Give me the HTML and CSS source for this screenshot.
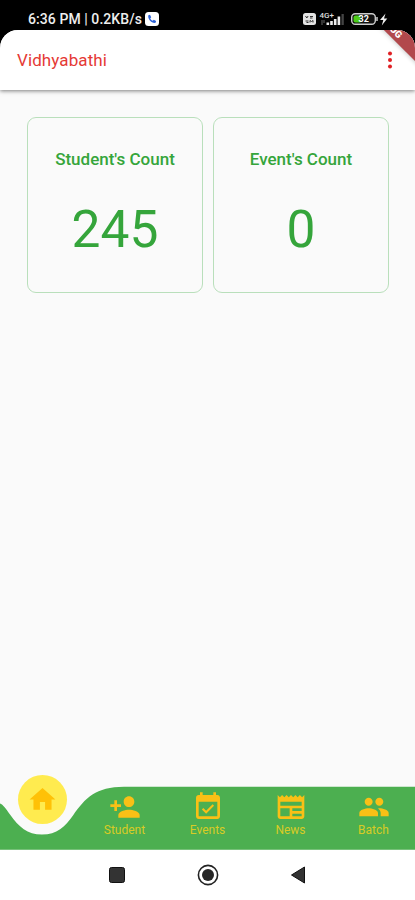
FILE: index.html
```html
<!DOCTYPE html>
<html lang="en">
<head>
<meta charset="utf-8">
<title>Vidhyabathi</title>
<link rel="stylesheet" href="styles.css">
</head>
<body>
<div class="phone">
  <div class="status">
    <span class="status-text">6:36 PM | 0.2KB/s</span>
    <svg class="call" width="14" height="14" viewBox="0 0 14 14"><rect width="14" height="14" rx="3.5" fill="#fff"/><path d="M3.3 3.2 5 2.7l1.2 2.5-1 1.2c.6 1.1 1.4 1.9 2.5 2.4l1.1-1 2.3 1.2-.5 1.8c-3.800.8-8.100-3.500-7.300-7.600z" fill="#2c62d8"/></svg>
    <svg class="signals" width="90" height="18" viewBox="0 0 90 18">
      <rect x="1" y="3" width="13" height="12" rx="2.5" fill="#e4e4e4"/>
      <path d="M3.500 6l1.300 2 1.300-2M8 6.500h3M8 8h2.500M3.500 11h3M4.500 12.500h2M8 12.500v-2l1.500 1 1.500-1v2" stroke="#333" fill="none"/>
      <text x="17.500" y="8" class="net">4G+</text>
      <path d="M20 10v5M22 10v3" stroke="#666" fill="none"/>
      <path d="M24.500 15v-2.500h2.600V15zM28.200 15v-4h2.600v4zM31.900 15V9h2.600v6zM35.600 15V6.500h2.600V15z" fill="#eee"/>
      <path d="M39.500 4h2.300v11h-2.300z" fill="#444"/>
      <rect x="49.700" y="3.700" width="23.600" height="10.600" rx="3.500" fill="#111" stroke="#ccc" stroke-width="1.400"/>
      <path d="M53.500 5.500h5v7h-5q-2 0-2-2v-3q0-2 2-2z" fill="#4bcb16"/>
      <text x="56.500" y="12.300" class="charge">32</text>
      <path d="M75 7v4" stroke="#ccc" stroke-width="1.500"/>
      <path d="M83.500 3.500 78 10h3.300l-1.500 5.500 5.500-7H82z" fill="#eee"/>
    </svg>
  </div>
  <div class="app">
    <header class="bar">
      <h1>Vidhyabathi</h1>
      <svg class="more" width="6" height="20" viewBox="0 0 6 20"><g fill="#e02024"><circle cx="3" cy="3.600" r="2"/><circle cx="3" cy="10" r="2"/><circle cx="3" cy="16.400" r="2"/></g></svg>
      <span class="banner">DEBUG</span>
    </header>
    <main class="cards">
      <section class="card"><h2>Student's Count</h2><p>245</p></section>
      <section class="card"><h2>Event's Count</h2><p>0</p></section>
    </main>
    <nav class="nav">
      <svg class="wave" width="415" height="64" viewBox="0 0 415 64"><path d="M0 17.500C3 18.500 6 23 10 28.500C19 41 27 48.500 42 48.500S65 41 73 29.500C85 12 96 .7 124 .7H415V63.700H0z" fill="#4caf50"/></svg>
      <a class="tab home"><span class="disc"><svg class="icon home-icon" viewBox="0 0 24 24"><path d="M10 20v-6h4v6h5v-8h3L12 3 2 12h3v8z"/></svg></span></a>
      <a class="tab"><svg class="icon" viewBox="0 0 24 24"><path d="M15 12c2.210 0 4-1.790 4-4s-1.790-4-4-4-4 1.790-4 4 1.790 4 4 4zm-9-2V7H4v3H1v2h3v3h2v-3h3v-2H6zm9 4c-2.670 0-8 1.340-8 4v2h16v-2c0-2.660-5.330-4-8-4z"/></svg><span>Student</span></a>
      <a class="tab"><svg class="icon" viewBox="0 0 24 24"><path d="M16.530 11.060L15.470 10l-4.880 4.880-2.120-2.120-1.060 1.060L10.590 17l5.940-5.940zM19 3h-1V1h-2v2H8V1H6v2H5c-1.110 0-1.990.9-1.990 2L3 19c0 1.100.89 2 2 2h14c1.100 0 2-.9 2-2V5c0-1.100-.9-2-2-2zm0 16H5V8h14v11z"/></svg><span>Events</span></a>
      <a class="tab"><svg class="icon" viewBox="0 0 24 24"><path d="M22 3l-1.670 1.670L18.670 3 17 4.670 15.330 3l-1.660 1.670L12 3l-1.670 1.670L8.670 3 7 4.670 5.330 3 3.670 4.670 2 3v16c0 1.100.9 2 2 2h16c1.100 0 2-.9 2-2V3zM11 19H4v-6h7v6zm9 0h-7v-2h7v2zm0-4h-7v-2h7v2zm0-4H4V8h16v3z"/></svg><span>News</span></a>
      <a class="tab"><svg class="icon" viewBox="0 0 24 24"><path d="M16 11c1.660 0 2.990-1.340 2.990-3S17.660 5 16 5s-3 1.340-3 3 1.340 3 3 3zm-8 0c1.660 0 2.990-1.340 2.990-3S9.660 5 8 5 5 6.340 5 8s1.340 3 3 3zm0 2c-2.330 0-7 1.170-7 3.500V19h14v-2.500c0-2.330-4.670-3.500-7-3.500zm8 0c-.29 0-.62.020-.97.050 1.160.84 1.970 1.970 1.970 3.450V19h6v-2.500c0-2.330-4.670-3.500-7-3.500z"/></svg><span>Batch</span></a>
    </nav>
  </div>
  <footer class="system">
    <svg width="16" height="16" viewBox="0 0 16 16"><rect x=".5" y=".5" width="15" height="15" rx="2" fill="#333" stroke="#111"/></svg>
    <svg width="22" height="22" viewBox="0 0 22 22"><circle cx="11" cy="11" r="9.600" fill="#fff" stroke="#222" stroke-width="1.600"/><circle cx="11" cy="11" r="6" fill="#262626"/></svg>
    <svg width="16" height="18" viewBox="0 0 16 18"><path d="M1.500 9 14.500 1v16z" fill="#333" stroke="#111"/></svg>
  </footer>
</div>
</body>
</html>
```
FILE: styles.css
```css
* { box-sizing: border-box; }

body {
  margin: 0;
  background: #000;
  font-family: Roboto, "Liberation Sans", sans-serif;
}

h1, h2, p { margin: 0; }
svg { display: block; }

.phone {
  width: 415px;
  height: 900px;
  display: flex;
  flex-direction: column;
}

.status {
  height: 30px;
  padding: 9px 23px 0 28px;
  display: flex;
  align-items: flex-start;
  background: #000;
  color: #eee;
}

.status-text {
  width: 117px;
  font-size: 14px;
  font-weight: 500;
  line-height: 21px;
  letter-spacing: 0.07px;
  white-space: nowrap;
}

.call { margin-top: 3px; }
.signals { margin: 1px 0 0 auto; }
.net { font-size: 8px; font-weight: 500; fill: #ddd; }
.charge { font-size: 9px; font-weight: 700; fill: #fff; }

.app {
  flex: 1;
  display: flex;
  flex-direction: column;
  overflow: hidden;
  border-radius: 18px 18px 0 0;
  background: #fafafa;
}

.bar {
  position: relative;
  height: 60px;
  padding: 0 22px 0 17px;
  display: flex;
  align-items: center;
  justify-content: space-between;
  background: #fff;
  box-shadow: 0 1px 4px rgba(0, 0, 0, 0.5);
}

.bar h1 {
  color: #e53935;
  font-size: 17px;
  font-weight: 400;
  line-height: 24px;
  letter-spacing: 0.1px;
}

.banner {
  position: absolute;
  left: 329.7px;
  top: -12.3px;
  width: 120px;
  height: 15px;
  transform: rotate(45deg);
  background: #b2484c;
  box-shadow: 0 0 5px rgba(0, 0, 0, 0.3);
  color: #fff;
  font-size: 9.5px;
  font-weight: 900;
  line-height: 15px;
  text-align: center;
}

.cards {
  flex: 1;
  padding: 26.5px 26px 0 27px;
  display: grid;
  grid-template-columns: 1fr 1fr;
  align-content: start;
  gap: 10px;
}

.card {
  height: 176px;
  padding-top: 30px;
  border: 1px solid #b9dfbb;
  border-radius: 9px;
  color: #35a53b;
  text-align: center;
}

.card h2 {
  font-size: 17px;
  font-weight: 500;
  line-height: 22px;
}

.card p {
  margin-top: 30.5px;
  font-size: 51.5px;
  line-height: 60px;
}

.nav {
  position: relative;
  height: 64px;
  display: grid;
  grid-template-columns: repeat(5, 1fr);
  color: #d8cb25;
}

.wave {
  position: absolute;
  left: 0;
  top: 0;
}

.tab {
  position: relative;
  padding-top: 5px;
  display: flex;
  flex-direction: column;
  align-items: center;
  font-size: 12px;
  line-height: 14px;
}

.icon {
  width: 32px;
  height: 32px;
  fill: #f9c016;
}

.home { padding: 0 0 0 1px; }

.disc {
  width: 49px;
  height: 49px;
  margin-top: -11px;
  display: flex;
  align-items: center;
  justify-content: center;
  border-radius: 50%;
  background: #ffeb4f;
}

.home-icon {
  width: 31px;
  height: 31px;
  fill: #ffc107;
}

.system {
  height: 50px;
  padding: 0 109px;
  display: flex;
  align-items: center;
  justify-content: space-between;
  background: #fff;
}
```
